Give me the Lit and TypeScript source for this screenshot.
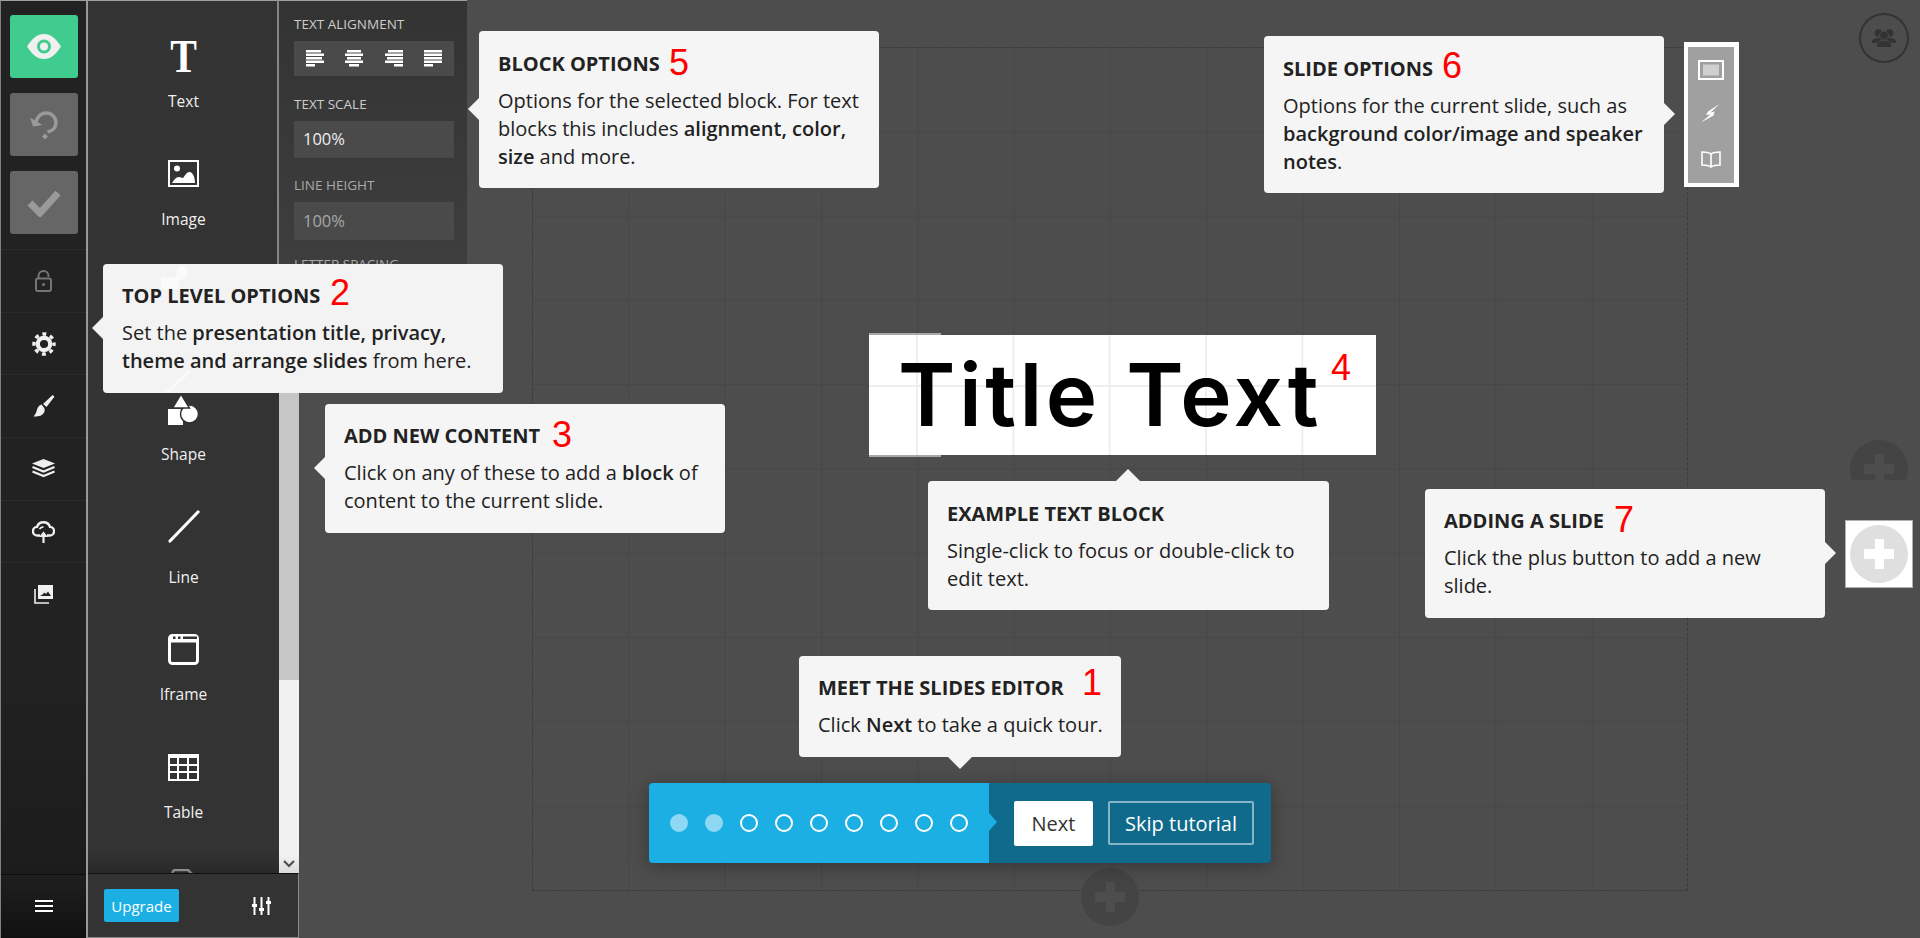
import { LitElement, html, css, svg } from "lit";
import { customElement } from "lit/decorators.js";

const alignRows: Record<string, [number, number][]> = {
  left: [[0, 15], [0, 18], [0, 16], [0, 18], [0, 9]],
  center: [[2, 14], [0, 18], [2, 14], [0, 18], [4, 10]],
  right: [[3, 15], [0, 18], [2, 16], [0, 18], [9, 9]],
  justify: [[0, 18], [0, 18], [0, 18], [0, 18], [0, 9]],
};

const icons = {
  eye: html`<svg width="34" height="25" viewBox="0 0 34 25"><path fill="#f0f0f0" fill-rule="evenodd" d="M0 12.5C5 4.5 10.500 0 17 0s12 4.500 17 12.500C29 20.500 23.500 25 17 25S5 20.500 0 12.500zM17 5.500a7 7 0 1 0 0 14 7 7 0 0 0 0-14z"/><circle cx="17" cy="12.500" r="4" fill="#f0f0f0"/></svg>`,
  undo: html`<svg width="30" height="30" viewBox="0 0 30 30"><path fill="none" stroke="#9a9a9a" stroke-width="3.500" d="M7 11.500C9 6 12.500 3 17 3c5.500 0 10 4 10 9.500 0 5-3.500 8.500-8.500 9.500"/><path fill="#9a9a9a" d="M1 7.500l3 9 9.500-1.500z"/><path fill="#9a9a9a" d="M16 23.500l3 3-3 3-3-3z"/></svg>`,
  check: html`<svg width="34" height="28" viewBox="0 0 34 28"><path fill="none" stroke="#9a9a9a" stroke-width="7" d="M3 14l10 10L31 4"/></svg>`,
  lock: html`<svg width="17" height="22" viewBox="0 0 17 22"><path fill="none" stroke="#757575" stroke-width="2" d="M3.500 8V6a5 5 0 0 1 10 0v1"/><rect x="1" y="8.500" width="15" height="12.500" rx="2" fill="none" stroke="#757575" stroke-width="2"/><circle cx="8.500" cy="14.500" r="1.600" fill="#757575"/></svg>`,
  gear: html`<svg width="24" height="24" viewBox="0 0 24 24"><circle cx="12" cy="12" r="6.200" fill="none" stroke="#f0f0f0" stroke-width="4.200"/><circle cx="12" cy="12" r="10" fill="none" stroke="#f0f0f0" stroke-width="3.400" stroke-dasharray="3.900 3.954" stroke-dashoffset="1.950"/></svg>`,
  brush: html`<svg width="24" height="24" viewBox="0 0 24 24"><path fill="#f0f0f0" d="M20 1.500c1-.8 2.700.6 2 1.800L14.500 13 11 10z"/><path fill="#f0f0f0" d="M9.500 10.500c-2.500.8-3.800 2.700-4.600 5.500-.5 2-1.300 4.200-3.400 6.500 4.500.3 9-.7 10.700-4.300.8-1.700.6-3.300-.3-4.700z"/></svg>`,
  layers: html`<svg width="23" height="20" viewBox="0 0 23 20"><path fill="#f0f0f0" d="M11.500 0L23 4.500 11.500 9 0 4.500z"/><path fill="none" stroke="#f0f0f0" stroke-width="2.200" d="M.5 8l11 4.500L22.500 8M.5 12.500l11 4.500 11-4.500"/></svg>`,
  cloud: html`<svg width="23" height="22" viewBox="0 0 23 22"><path fill="none" stroke="#f0f0f0" stroke-width="2.400" d="M8 14.500H5.500a4.300 4.300 0 0 1-.5-8.600C6 3 8.500 1.300 11.500 1.300S17 3 18 5.900a4.300 4.300 0 0 1-.500 8.600H15"/><path fill="none" stroke="#f0f0f0" stroke-width="1.800" d="M7.500 8c1-1.500 2.300-2.200 4-2.200"/><path fill="none" stroke="#f0f0f0" stroke-width="2.200" d="M11.500 22v-8"/><path fill="#f0f0f0" d="M11.500 10.500l4.500 5.500H7z"/></svg>`,
  images: html`<svg width="19" height="19" viewBox="0 0 19 19"><path fill="#f0f0f0" d="M4 0h15v14H4z"/><path fill="#222" d="M6 11h11l-3-4.500-2 2.500-1.500-1.500-2 2z"/><path fill="none" stroke="#f0f0f0" stroke-width="1.600" d="M1 4v14h14"/></svg>`,
  text: html`<span class="t-glyph">T</span>`,
  image: html`<svg width="31" height="27" viewBox="0 0 31 27"><rect x="1" y="1" width="29" height="25" fill="none" stroke="#fff" stroke-width="2"/><circle cx="9" cy="8.500" r="3" fill="#fff"/><path fill="#fff" d="M4 23c2-3 4-6 7-6 1.500 0 2.500 1 3.500 1 2 0 3-6 7-6 4 0 5.500 7 5.500 11z"/></svg>`,
  shape: html`<svg width="31" height="31" viewBox="0 0 31 31"><rect x="0" y="15" width="15" height="16" fill="#fff"/><circle cx="21.500" cy="20" r="9" fill="#fff" stroke="#333" stroke-width="1.500"/><path fill="#fff" stroke="#333" stroke-width="1.500" d="M13 0l8.500 14h-17z"/></svg>`,
  line: html`<svg width="32" height="33" viewBox="0 0 32 33"><path fill="none" stroke="#fff" stroke-width="3.200" stroke-linecap="round" d="M2 31L30 2"/></svg>`,
  iframe: html`<svg width="31" height="31" viewBox="0 0 31 31"><rect x="1.500" y="1.500" width="28" height="28" rx="3" fill="none" stroke="#fff" stroke-width="3"/><rect x="1" y="6" width="29" height="2.500" fill="#fff"/><path fill="#fff" d="M1 2h29v4H1z"/><rect x="5" y="2.500" width="2.500" height="2.500" fill="#333"/><rect x="10" y="2.500" width="2.500" height="2.500" fill="#333"/><rect x="15" y="2.500" width="14" height="2.500" fill="#333"/></svg>`,
  table: html`<svg width="31" height="27" viewBox="0 0 31 27"><path fill="#fff" fill-rule="evenodd" d="M0 0h31v27H0zM2 4v6h7V4zm9 0v6h8V4zm10 0v6h8V4zM2 12v5h7v-5zm9 0v5h8v-5zm10 0v5h8v-5zM2 19v6h7v-6zm9 0v6h8v-6zm10 0v6h8v-6z"/></svg>`,
  doc: html`<svg width="25" height="31" viewBox="0 0 25 31"><path fill="none" stroke="#fff" stroke-width="2.500" d="M1.500 30V4a3 3 0 0 1 3-3H17l7 7v22"/></svg>`,
  sliders: html`<svg width="19" height="18" viewBox="0 0 19 18"><g fill="#fff"><rect x="1.500" y="0" width="2" height="18"/><rect x="8.500" y="0" width="2" height="18"/><rect x="15.500" y="0" width="2" height="18"/><rect x="0" y="7" width="5" height="3"/><rect x="7" y="11" width="5" height="3"/><rect x="14" y="4" width="5" height="3"/></g></svg>`,
  slideBg: html`<svg width="26" height="20" viewBox="0 0 26 20"><rect x="1" y="1" width="24" height="18" fill="#a0a0a0" stroke="#fff" stroke-width="2"/><rect x="5" y="4.500" width="16" height="11" fill="#cfcfcf"/></svg>`,
  bolt: html`<svg width="20" height="20" viewBox="0 0 20 20"><path fill="#fff" d="M18.500 0L7 7.500 5 11l4.500-.5L0 18.500l12.500-7 1-4-4 1z"/></svg>`,
  book: html`<svg width="20" height="17" viewBox="0 0 20 17"><path fill="none" stroke="#fff" stroke-width="1.600" d="M10 3C8 1.500 4.500 1 1 1v13c3.500 0 7 .5 9 2 2-1.500 5.500-2 9-2V1c-3.500 0-7 .5-9 2zm0 0v13"/></svg>`,
  people: html`<svg width="24" height="20" viewBox="0 0 24 20"><g fill="#333"><circle cx="6.500" cy="5" r="3.800"/><circle cx="17.500" cy="5" r="3.800"/><path d="M0 14c0-3 3-4 6.500-4S13 11 13 14v1H0zM11 14c0-3 3-4 6.500-4s6.500 1 6.500 4v1H11z"/></g><circle cx="12" cy="7.500" r="4.500" fill="#333" stroke="#4d4d4d"/><path fill="#333" stroke="#4d4d4d" d="M4.500 18c0-4 3-5.500 7.500-5.500s7.500 1.500 7.500 5.500v1.500h-15z"/></svg>`,
};

const rows = ["lock", "gear", "brush", "layers", "cloud", "images"] as const;
const items: { ic?: keyof typeof icons; label?: string; mod?: string }[] = [
  { ic: "text", label: "Text" },
  { ic: "image", label: "Image" },
  {},
  { ic: "shape", label: "Shape" },
  { ic: "line", label: "Line", mod: "nudge" },
  { ic: "iframe", label: "Iframe" },
  { ic: "table", label: "Table" },
  { ic: "doc" },
];

const numbers = [
  { n: 1, x: 1082, y: 665 },
  { n: 2, x: 330, y: 275 },
  { n: 3, x: 552, y: 417 },
  { n: 4, x: 1331, y: 350 },
  { n: 5, x: 669, y: 45 },
  { n: 6, x: 1442, y: 48 },
  { n: 7, x: 1614, y: 502 },
];

@customElement("app-root")
export class AppRoot extends LitElement {
  static styles = css`
    :host { display: block; width: 100%; height: 100vh; overflow: hidden; background: #4d4d4d; font-family: "Open Sans", sans-serif; }
    * { box-sizing: border-box; }
    .page { display: flex; height: 938px; width: 1920px; position: relative; overflow: hidden; }

    .rail { width: 88px; flex: none; display: flex; flex-direction: column; border-left: 1px solid #808080; border-right: 2px solid #999; border-top: 1px solid #a0a0a0; background: linear-gradient(#222 0%, #222 70%, #1a1a1a 100%); }
    .actions { display: flex; flex-direction: column; gap: 15px; padding: 14px 8px 15px 9px; }
    .act { height: 63px; border-radius: 3px; background: #666; display: flex; align-items: center; justify-content: center; }
    .act.go { background: #40cc8f; }
    .row { height: 62.700px; border-top: 1px solid #2b2b2b; display: flex; align-items: center; justify-content: center; }
    .rail-end { margin-top: auto; height: 64px; border-top: 1px solid #0c0c0c; background: linear-gradient(#1f1f1f, #111); display: flex; align-items: center; justify-content: center; }
    .burger { width: 18px; display: flex; flex-direction: column; gap: 3px; margin-top: -2px; }
    .burger i { display: block; height: 2px; background: #fff; }

    .panel { width: 211px; flex: none; display: flex; flex-direction: column; background: #333; border-top: 1px solid #a0a0a0; }
    .panel-main { flex: 1; display: flex; min-height: 0; }
    .list { flex: 1; min-width: 0; overflow: hidden; padding-top: 20px; position: relative; }
    .list::after { content: ""; position: absolute; left: 0; right: 0; bottom: 0; height: 22px; background: linear-gradient(rgba(51,51,51,0), rgba(34,34,34,.6)); }
    .item { height: 117.700px; padding-top: 15px; display: flex; flex-direction: column; align-items: center; }
    .item.nudge { margin-top: 5px; }
    .item.nudge .ico { padding-bottom: 10px; }
    .ico { height: 40px; display: flex; align-items: center; justify-content: center; margin-bottom: 15px; }
    .lbl { font-size: 15.500px; line-height: 20px; color: #f0f0f0; }
    .t-glyph { font-family: "Liberation Serif", serif; font-weight: 700; font-size: 47px; line-height: 40px; color: #fff; display: block; transform: scaleX(.85); }
    .bar { width: 20px; flex: none; display: flex; flex-direction: column; background: #f1f1f1; }
    .thumb { height: 679px; background: #c6c6c6; }
    .track { flex: 1; }
    .down { height: 18px; display: flex; align-items: center; justify-content: center; background: linear-gradient(#f1f1f1, #dcdcdc); }
    .panel-end { height: 65px; flex: none; border-top: 1px solid #0f0f0f; border-right: 1px solid #8a8a8a; border-bottom: 1px solid #8a8a8a; display: flex; align-items: center; justify-content: space-between; padding: 0 27px 0 16px; }
    .upgrade { width: 75px; height: 33px; border-radius: 2px; background: #1bafe4; color: #fff; font-size: 15px; display: flex; align-items: center; justify-content: center; }

    .options { position: absolute; left: 277px; top: 0; width: 190px; height: 340px; padding: 15px 13px 0 15px; border-left: 2px solid #858585; border-top: 1px solid #a0a0a0; background: linear-gradient(#333, #414141); overflow: hidden; }
    .options h5 { margin: -1px 0 8px; font-size: 13.500px; line-height: 18px; font-weight: 400; color: #ccc; text-transform: uppercase; white-space: nowrap; }
    .options h5.dim { color: #aaa; }
    .aligns { height: 35px; background: #4a4a4a; display: flex; align-items: center; justify-content: space-around; padding: 0 1px; margin-bottom: 20px; }
    .field { height: 37px; background: #4a4a4a; display: flex; align-items: center; padding: 0 0 2px 9px; font-size: 16.500px; color: #eee; margin-bottom: 19px; }
    .field.dim { color: #a8a8a8; height: 38px; margin-bottom: 16px; }

    .canvas { flex: 1; min-width: 0; padding: 47px 232px 47px 233px; }
    .slide { height: 844px; border: 1px dashed #3c3c3c; background-image: linear-gradient(#474747 1px, transparent 1px), linear-gradient(90deg, #474747 1px, transparent 1px); background-size: 96.330px 84.300px; background-position: -1px -1px; }

    .block { position: absolute; left: 869px; top: 335px; width: 507px; height: 120px; background-color: #fff; background-image: linear-gradient(#eee 2px, transparent 2px), linear-gradient(90deg, #eee 2px, transparent 2px); background-size: 96.330px 84.300px; background-position: 47px 50px; color: #000; font-family: Inter, sans-serif; font-weight: 600; font-size: 87px; line-height: 120px; letter-spacing: 3.500px; padding-left: 29px; white-space: nowrap; }
    .block-edge { position: absolute; left: 869px; top: 333px; width: 72px; height: 124px; border-top: 2px solid #a8a8a8; border-bottom: 2px solid #a8a8a8; background: #fff; }

    .tip { position: absolute; background: #f5f5f5; border-radius: 4px; padding: 18px 19px; color: #222; font-size: 20px; line-height: 28px; }
    .tip h4 { margin: 0 0 9px; width: fit-content; font-size: 20px; line-height: 28px; font-weight: 700; text-transform: uppercase; color: #222; white-space: nowrap; }
    .tip p { margin: 0; position: relative; }
    .tip b { font-weight: 600; }
    .tip::before { content: ""; position: absolute; width: 0; height: 0; border: 11px solid transparent; }
    .tip.l::before { right: 100%; top: var(--a); border-left-width: 0; border-right-color: #f5f5f5; }
    .tip.r::before { left: 100%; top: var(--a); border-right-width: 0; border-left-color: #f5f5f5; }
    .tip.u::before { bottom: 100%; left: var(--a); border-width: 0 12px 12px; border-bottom-color: #f5f5f5; }
    .tip.d::before { top: 100%; left: var(--a); border-width: 12px 12px 0; border-top-color: #f5f5f5; }
    .t1 { left: 799px; top: 656px; width: 322px; --a: 149px; }
    .t1 p { white-space: nowrap; }
    .t2 { left: 103px; top: 264px; width: 400px; --a: 53px; background: #f3f3f3; }
    .t2.l::before { border-right-color: #f3f3f3; }
    .t3 { left: 325px; top: 404px; width: 400px; --a: 53px; }
    .t4 { left: 928px; top: 481px; width: 401px; --a: 188px; padding-top: 19px; padding-bottom: 17px; }
    .t5 { left: 479px; top: 31px; width: 400px; --a: 67px; padding-top: 19px; padding-bottom: 17px; }
    .t6 { left: 1264px; top: 36px; width: 400px; --a: 67px; padding-top: 19px; padding-bottom: 17px; }
    .t7 { left: 1425px; top: 489px; width: 400px; --a: 53px; }
    .ghost { position: absolute; }
    .ghost.a { left: 56px; top: 1px; }
    .ghost.b { left: 62px; top: 106px; }
    .t2 h4, .t2 p { position: relative; }

    .num { position: absolute; font-family: "Liberation Sans", sans-serif; font-size: 36px; line-height: 36px; color: #f00; }

    .tour { position: absolute; left: 649px; top: 783px; width: 622px; height: 80px; border-radius: 4px; display: flex; background: #0f6a8b; box-shadow: 0 3px 18px rgba(0,0,0,.3); }
    .steps { width: 340px; flex: none; position: relative; border-radius: 4px 0 0 4px; background: #1bafe4; display: flex; align-items: center; gap: 17px; padding-left: 21px; }
    .steps::after { content: ""; position: absolute; left: 100%; top: 30px; border: 9px solid transparent; border-right-width: 0; border-left: 8px solid #1bafe4; }
    .dot { width: 18px; height: 18px; border-radius: 50%; border: 2px solid #fff; flex: none; }
    .dot.done { background: #8fd8f3; border-color: #8fd8f3; }
    .tour-btns { display: flex; align-items: flex-start; padding: 18px 0 0 25px; gap: 15px; }
    .next { width: 79px; height: 45px; background: #fff; color: #333; border-radius: 2px; font-size: 20px; display: flex; align-items: center; justify-content: center; }
    .skip { width: 146px; height: 44px; border: 2px solid rgba(255,255,255,.5); border-radius: 2px; color: #fff; font-size: 20px; display: flex; align-items: center; justify-content: center; white-space: nowrap; }

    .slide-opts { position: absolute; left: 1684px; top: 42px; width: 55px; height: 145px; border: 4px solid #fff; border-width: 5px 5px 4px 4px; background: #a0a0a0; display: flex; flex-direction: column; align-items: center; padding-top: 13px; }
    .slide-opts div { height: 20px; display: flex; align-items: center; justify-content: center; }
    .slide-opts div + div { margin-top: 24px; }
    .slide-opts .b3 { margin-top: 25px; }

    .collab { position: absolute; left: 1859px; top: 13px; width: 50px; height: 50px; border-radius: 50%; border: 2px solid #333; display: flex; align-items: center; justify-content: center; }

    .add { position: absolute; width: 58px; height: 58px; border-radius: 50%; background: #444; }
    .add::before, .add::after { content: ""; position: absolute; background: #4d4d4d; }
    .add::before { left: 14px; right: 14px; top: 24px; height: 10px; }
    .add::after { top: 14px; bottom: 14px; left: 24.500px; width: 9px; }
    .add.south { left: 1081px; top: 868px; }
    .clip { position: absolute; left: 1850px; top: 440px; width: 58px; height: 40px; overflow: hidden; }
    .clip .add { left: 0; top: 0; }
    .add-box { position: absolute; left: 1845px; top: 520px; width: 68px; height: 68px; background: #fff; border: 1px solid #b0b0b0; }
    .add-box .add { left: 4px; top: 4px; background: #dfdfdf; }
    .add-box .add::before, .add-box .add::after { background: #fff; }
  `;

  private align(kind: string) {
    return html`<svg width="18" height="17" viewBox="0 0 18 17">${alignRows[kind].map(
      ([x, w], i) => svg`<rect x=${x} y=${i * 3.5} width=${w} height="2.500" fill="#fff"/>`
    )}</svg>`;
  }

  render() {
    return html`
      <div class="page">
        <aside class="rail">
          <div class="actions">
            <div class="act go">${icons.eye}</div>
            <div class="act">${icons.undo}</div>
            <div class="act">${icons.check}</div>
          </div>
          ${rows.map((r) => html`<div class="row">${icons[r]}</div>`)}
          <div class="rail-end"><div class="burger"><i></i><i></i><i></i></div></div>
        </aside>

        <section class="panel">
          <div class="panel-main">
            <div class="list">
              ${items.map(
                (it) => html`<div class="item ${it.mod ?? ""}">
                  ${it.ic ? html`<div class="ico">${icons[it.ic]}</div>` : ""}
                  ${it.label ? html`<div class="lbl">${it.label}</div>` : ""}
                </div>`
              )}
            </div>
            <div class="bar">
              <div class="thumb"></div>
              <div class="track"></div>
              <div class="down"><svg width="12" height="8" viewBox="0 0 12 8"><path fill="none" stroke="#505050" stroke-width="2.200" d="M1 1l5 5 5-5"/></svg></div>
            </div>
          </div>
          <div class="panel-end">
            <div class="upgrade">Upgrade</div>
            ${icons.sliders}
          </div>
        </section>

        <main class="canvas"><div class="slide"></div></main>

        <div class="options">
          <h5>Text alignment</h5>
          <div class="aligns">${["left", "center", "right", "justify"].map((k) => this.align(k))}</div>
          <h5>Text scale</h5>
          <div class="field">100%</div>
          <h5 class="dim">Line height</h5>
          <div class="field dim">100%</div>
          <h5 class="dim">Letter spacing</h5>
        </div>

        <div class="add south"></div>
        <div class="clip"><div class="add"></div></div>
        <div class="collab">${icons.people}</div>

        <div class="block-edge"></div>
        <div class="block">Title Text</div>

        <div class="slide-opts">
          <div>${icons.slideBg}</div>
          <div>${icons.bolt}</div>
          <div class="b3">${icons.book}</div>
        </div>
        <div class="add-box"><div class="add"></div></div>

        <div class="tip d t1"><h4>Meet the Slides editor</h4><p>Click <b>Next</b> to take a quick tour.</p></div>
        <div class="tip l t2">
          <svg class="ghost a" width="30" height="26" viewBox="0 0 30 26"><path fill="#fafafa" d="M2 12h14c2-6 2-10 6-12 4-1 7 3 7 6 0 5-4 9-9 9v8c-6 3-12 3-18 0z"/></svg>
          <svg class="ghost b" width="26" height="23" viewBox="0 0 26 23"><path fill="none" stroke="#fafafa" stroke-width="3" d="M1 23L25 1"/></svg>
          <h4>Top level options</h4>
          <p>Set the <b>presentation title, privacy, theme and arrange slides</b> from here.</p>
        </div>
        <div class="tip l t3"><h4>Add new content</h4><p>Click on any of these to add a <b>block</b> of content to the current slide.</p></div>
        <div class="tip u t4"><h4>Example text block</h4><p>Single-click to focus or double-click to edit text.</p></div>
        <div class="tip l t5"><h4>Block options</h4><p>Options for the selected block. For text blocks this includes <b>alignment, color, size</b> and more.</p></div>
        <div class="tip r t6"><h4>Slide options</h4><p>Options for the current slide, such as <b>background color/image and speaker notes</b>.</p></div>
        <div class="tip r t7"><h4>Adding a slide</h4><p>Click the plus button to add a new slide.</p></div>

        <div class="tour">
          <div class="steps">
            ${[0, 1, 2, 3, 4, 5, 6, 7, 8].map((i) => html`<span class="dot ${i < 2 ? "done" : ""}"></span>`)}
          </div>
          <div class="tour-btns">
            <div class="next">Next</div>
            <div class="skip">Skip tutorial</div>
          </div>
        </div>

        ${numbers.map((d) => html`<span class="num" style="left:${d.x}px;top:${d.y}px">${d.n}</span>`)}
      </div>
    `;
  }
}
